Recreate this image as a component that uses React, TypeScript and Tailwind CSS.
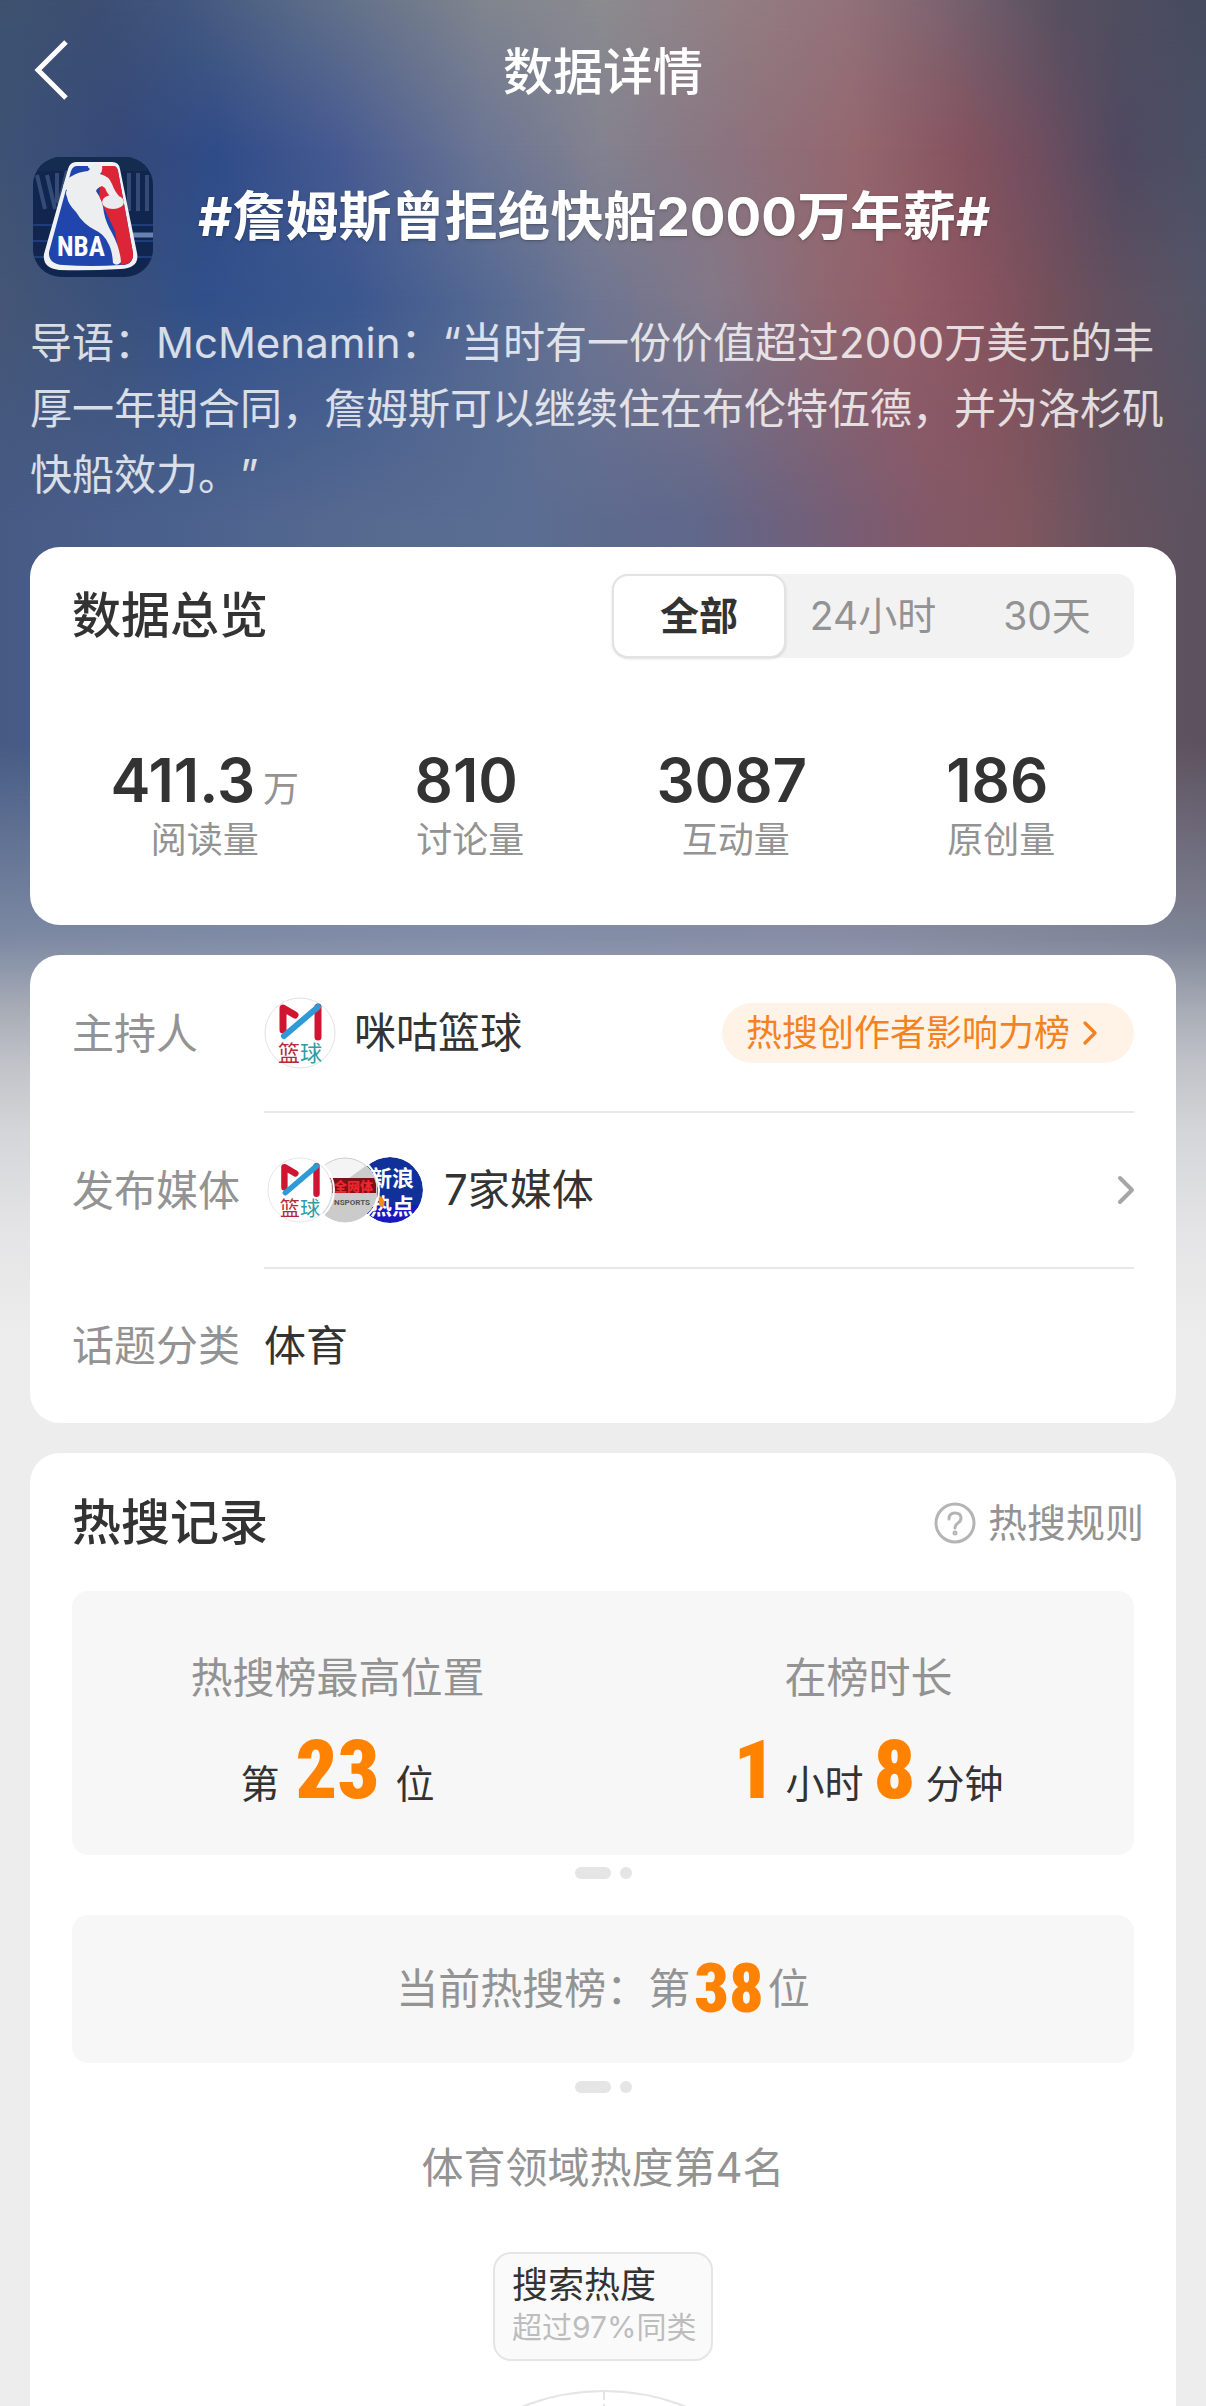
import { ChevronRight } from "lucide-react";
import { useState } from "react";

type IStat = {
  value: string;
  unit?: string;
  label: string;
};

const stats: IStat[] = [
  { value: "411.3", unit: "万", label: "阅读量" },
  { value: "810", label: "讨论量" },
  { value: "3087", label: "互动量" },
  { value: "186", label: "原创量" },
];

const tabs = ["全部", "24小时", "30天"];

// Blurred cover: horizontal colour bands that fade into each other downwards
const Backdrop = () => (
  <div aria-hidden="true" className="absolute inset-x-0 top-0 h-[1350px]">
    <div className="absolute inset-0 bg-[linear-gradient(90deg,#3e526f_0%,#3d4e72_8%,#41577f_15%,#5a6b88_25%,#80858e_40%,#8b8b90_50%,#937d82_62%,#93727a_70%,#7d6470_78%,#565060_88%,#464b60_100%)]" />
    <div className="absolute inset-0 bg-[linear-gradient(90deg,#3e5275_0%,#35497a_10%,#304c88_18%,#465a92_28%,#6b7594_40%,#83828f_50%,#8b747f_60%,#95676f_71%,#85535f_80%,#704e60_86%,#4f4960_93%,#4a5066_100%)] [mask-image:linear-gradient(180deg,transparent_0px,black_150px)]" />
    <div className="absolute inset-0 bg-[linear-gradient(90deg,#455676_0%,#39517c_10%,#31508a_17%,#3b578f_29%,#536892_40%,#6d7592_49%,#837888_59%,#90666f_69%,#935d68_75%,#86535f_82%,#74505b_87%,#63505f_92%,#535568_100%)] [mask-image:linear-gradient(180deg,transparent_150px,black_300px)]" />
    <div className="absolute inset-0 bg-[linear-gradient(90deg,#465a84_0%,#4b618d_15%,#566a90_30%,#5b6d92_44%,#60678a_58%,#735f78_68%,#845968_77%,#82575f_84%,#67535f_92%,#5c515f_100%)] [mask-image:linear-gradient(180deg,transparent_300px,black_520px)]" />
    <div className="absolute inset-0 bg-[linear-gradient(90deg,#7d8aa3_0%,#838ea9_40%,#888ea6_70%,#7f8596_100%)] [mask-image:linear-gradient(180deg,transparent_740px,black_940px)]" />
    <div className="absolute inset-0 bg-[linear-gradient(180deg,transparent_940px,#a8acb6_1010px,#c1c3c9_1065px,#d4d5d8_1130px,#e4e4e6_1230px,#ededed_1340px)]" />
  </div>
);

const CoverLogo = () => (
  <svg viewBox="0 0 120 120" role="img" aria-label="NBA" className="size-[120px] shrink-0 rounded-[28px]">
    <rect width="120" height="120" fill="#10264f" />
    <rect width="120" height="14" fill="#142c50" />
    <path d="M4 18l8 34M14 18l8 34M24 16v30M34 14l-8 34M96 16v38M105 16v38M114 18v36" stroke="#4b6590" strokeWidth="4" opacity=".6" />
    <path d="M0 68h120M0 84h120M0 100h120" stroke="#27498c" strokeWidth="2" opacity=".7" />
    <path d="M88 78h32" stroke="#8ea9d8" strokeWidth="5" opacity=".7" />
    <path d="M43 5h36q7 0 8 7l17 84q3 15-17 16-31 2-61 1-17-2-15-16L35 12q2-7 8-7z" fill="#f1f2f4" />
    <path d="M44 9h36q4 0 5 5l15 82q1 12-12 12-30 2-58 0-15-1-14-13L38 14q2-5 6-5z" fill="#2046ae" />
    <path d="M69 9h11q4 0 5 5l15 82q1 11-12 12l-6-34-16-34z" fill="#dc2638" />
    <path d="M59 9q5-5 10 0 1 5-2 8 9 2 12 10 3 8 7 12l-4 4q-7-4-10-12l-3-2q-5 2-6 5 7 10 8 22 2 10 8 20 8 15 9 29-4 5-8 1-1-14-5-20-4-9-13-13-12-6-19-18-8-8-9-15-2-4 0-7l-4-2q1-9 9-12 6-4 16-5l2-2q-3-2-2-4z" fill="#eceef0" />
    <ellipse cx="80" cy="45" rx="11" ry="7" fill="#e9ebee" />
    <text x="24" y="99" fill="#ffffff" fontSize="27" fontWeight="700" fontFamily="Roboto Condensed, Liberation Sans, sans-serif">
      NBA
    </text>
  </svg>
);

const MiguAvatar = ({ className }: { className: string }) => (
  <svg viewBox="0 0 72 72" role="img" aria-label="咪咕篮球" className={className}>
    <circle cx="36" cy="36" r="35" fill="#ffffff" stroke="#e2e2e2" />
    <path d="M19 33V11l12 7M54 10v30" fill="none" stroke="#cf1531" strokeWidth="7" strokeLinecap="round" strokeLinejoin="round" />
    <path d="M20 39L54 10" stroke="#2f9ad6" strokeWidth="6" strokeLinecap="round" />
    <text x="14" y="64" fontSize="22" fill="#b02a3c" fontFamily="Noto Sans CJK SC, sans-serif">
      篮<tspan fill="#2e9ba6">球</tspan>
    </text>
  </svg>
);

const SportsAvatar = ({ className }: { className: string }) => (
  <svg viewBox="0 0 66 66" role="img" aria-label="Sports" className={className}>
    <clipPath id="sports-clip">
      <circle cx="33" cy="33" r="32" />
    </clipPath>
    <circle cx="33" cy="33" r="32" fill="#f4f4f4" />
    <path d="M66 0v66H0V48z" fill="#cbcbcb" clipPath="url(#sports-clip)" />
    <rect x="12" y="21" width="52" height="15" fill="#7a1218" clipPath="url(#sports-clip)" />
    <text x="22" y="34" fontSize="13" fontWeight="900" fill="#f0252d" fontFamily="Noto Sans CJK SC, sans-serif">
      全网体
    </text>
    <text x="22" y="48" fontSize="8" fontWeight="700" fill="#555555" fontFamily="Roboto, sans-serif">
      NSPORTS
    </text>
    <circle cx="33" cy="33" r="32" fill="none" stroke="#cccccc" />
  </svg>
);

const SinaAvatar = ({ className }: { className: string }) => (
  <svg viewBox="0 0 66 66" role="img" aria-label="新浪热点" className={className}>
    <circle cx="33" cy="33" r="33" fill="#10309a" />
    <path d="M4 48h58a33 33 0 0 1-58 0z" fill="#1b18c0" />
    <g fill="#ffffff" fontSize="22" fontWeight="700" fontFamily="Noto Sans CJK SC, sans-serif">
      <text x="13" y="29">新浪</text>
      <text x="13" y="57">热点</text>
    </g>
    <path d="M22 38q8 5 4 13-6-2-4-13z" fill="#f28a1c" />
  </svg>
);

const PagerDots = () => (
  <div aria-hidden="true" className="flex justify-center gap-[9px]">
    <span className="h-3 w-9 rounded-full bg-[#e5e5e5]" />
    <span className="size-3 rounded-full bg-[#e5e5e5]" />
  </div>
);

const Big = ({ children }: { children: string }) => (
  <b className="font-['Roboto_Condensed','Liberation_Sans_Narrow',sans-serif] text-[82px] leading-[84px] font-black text-[#ff8200]">
    {children}
  </b>
);

const Overview = () => {
  const [active, setActive] = useState(0);

  return (
    <section className="rounded-[30px] bg-white px-[42px] pt-[27px] pb-[63px]">
      <header className="flex items-center justify-between">
        <h2 className="text-[49px] leading-[72px] font-medium">数据总览</h2>
        <div className="flex w-[522px] rounded-2xl bg-[#f2f2f2]">
          {tabs.map((tab, i) => (
            <button
              key={tab}
              type="button"
              aria-pressed={i === active}
              onClick={() => setActive(i)}
              className={
                i === active
                  ? "h-[84px] w-[174px] rounded-2xl border-2 border-[#e3e3e3] bg-white text-[39px] font-bold shadow-sm"
                  : "h-[84px] w-[174px] text-[39px] text-[#939393]"
              }
            >
              {tab}
            </button>
          ))}
        </div>
      </header>
      <dl className="mt-[84px] grid grid-cols-4">
        {stats.map((stat) => (
          <div key={stat.label} className="flex flex-col-reverse items-center">
            <dt className="text-4xl leading-[44px] text-[#939393]">{stat.label}</dt>
            <dd className="flex items-baseline gap-2 text-[60px] leading-[76px] font-semibold">
              {stat.value}
              <span className="text-4xl font-normal text-[#939393]">{stat.unit}</span>
            </dd>
          </div>
        ))}
      </dl>
    </section>
  );
};

const App = () => {
  return (
    <main
      lang="zh-CN"
      className="relative overflow-hidden bg-[#ededed] font-[Inter,'Noto_Sans_CJK_SC',sans-serif] text-[#333333]"
    >
      <Backdrop />
      <div className="relative px-[30px]">
        <nav className="grid h-36 grid-cols-[72px_1fr_72px] items-center text-white">
          <button type="button" aria-label="返回" className="pb-1">
            <svg viewBox="0 0 48 60" aria-hidden="true" className="h-[60px] w-12" fill="none" stroke="currentColor" strokeWidth="5">
              <path d="M36 2L8 30l28 28" />
            </svg>
          </button>
          <h1 className="text-center text-[50px] leading-[72px] font-medium">数据详情</h1>
        </nav>

        <header className="mt-[13px] flex items-center gap-[45px] pl-[3px]">
          <CoverLogo />
          <p className="text-[53px] leading-[72px] font-bold text-white text-shadow-md">
            #詹姆斯曾拒绝快船2000万年薪#
          </p>
        </header>

        <p className="mt-[33px] text-[42px] leading-[66px] text-white/80 [text-spacing-trim:space-all]">
          导语：McMenamin：“当时有一份价值超过2000万美元的丰厚一年期合同，詹姆斯可以继续住在布伦特伍德，并为洛杉矶快船效力。”
        </p>

        <div className="mt-[39px] flex flex-col gap-[30px]">
          <Overview />

          <section className="rounded-[30px] bg-white px-[42px] text-[42px] leading-[60px]">
            <div className="flex">
              <span className="flex h-[158px] w-48 items-center text-[#939393]">主持人</span>
              <div className="flex flex-1 items-center border-b-2 border-[#e8e8e8]">
                <MiguAvatar className="size-[72px]" />
                <span className="ml-[18px] flex-1">咪咕篮球</span>
                <a href="#rank" className="flex h-[60px] items-center rounded-full bg-[#fff3e8] px-6 text-4xl text-[#f58220]">
                  热搜创作者影响力榜
                  <ChevronRight className="size-10" strokeWidth={2} />
                </a>
              </div>
            </div>
            <div className="flex">
              <span className="flex h-[156px] w-48 items-center text-[#939393]">发布媒体</span>
              <a href="#media" className="flex flex-1 items-center border-b-2 border-[#e8e8e8]">
                <span className="flex pl-[3px]">
                  <MiguAvatar className="z-20 size-[66px] rounded-full ring-2 ring-white" />
                  <SportsAvatar className="z-10 -ml-[21px] size-[66px] rounded-full ring-2 ring-white" />
                  <SinaAvatar className="-ml-[21px] size-[66px] rounded-full" />
                </span>
                <span className="ml-[21px] flex-1">7家媒体</span>
                <ChevronRight className="-mr-4 size-12 text-[#a6a6a6]" strokeWidth={2} />
              </a>
            </div>
            <div className="flex h-[154px] items-center">
              <span className="w-48 text-[#939393]">话题分类</span>
              <span>体育</span>
            </div>
          </section>

          <section className="rounded-t-[30px] bg-white px-[42px] pt-[34px]">
            <header className="flex items-center justify-between">
              <h2 className="text-[49px] leading-[72px] font-medium">热搜记录</h2>
              <a href="#rules" className="-mr-[10px] flex items-center gap-3 text-[39px] leading-[60px] text-[#939393]">
                <svg viewBox="0 0 42 42" aria-hidden="true" className="size-[42px]" fill="none" stroke="#b5b5b5" strokeWidth="3">
                  <circle cx="21" cy="21" r="19" />
                  <path d="M15 17q0-6 6-6t6 5q0 3-3 5t-3 5" strokeLinecap="round" />
                  <circle cx="21" cy="31" r="1" />
                </svg>
                热搜规则
              </a>
            </header>

            <dl className="mt-8 grid h-[264px] grid-cols-2 rounded-2xl bg-[#f7f7f7] pt-[57px] text-center">
              <div>
                <dt className="text-[42px] leading-[60px] text-[#939393]">热搜榜最高位置</dt>
                <dd className="mt-5 flex items-baseline justify-center gap-4 text-[39px] leading-[84px]">
                  第<Big>23</Big>位
                </dd>
              </div>
              <div>
                <dt className="text-[42px] leading-[60px] text-[#939393]">在榜时长</dt>
                <dd className="mt-5 flex items-baseline justify-center gap-[10px] text-[39px] leading-[84px]">
                  <Big>1</Big>小时<Big>8</Big>分钟
                </dd>
              </div>
            </dl>
            <div className="mt-3">
              <PagerDots />
            </div>

            <p className="mt-9 flex h-[148px] items-center justify-center rounded-2xl bg-[#f7f7f7] text-[42px] leading-[60px] text-[#939393]">
              当前热搜榜：第
              <b className="mx-1 font-['Roboto_Condensed','Liberation_Sans_Narrow',sans-serif] text-[68px] font-black text-[#ff8200]">
                38
              </b>
              位
            </p>
            <div className="mt-[18px]">
              <PagerDots />
            </div>

            <p className="mt-[45px] text-center text-[42px] leading-[60px] text-[#939393]">体育领域热度第4名</p>

            <div className="mx-auto mt-[54px] w-[220px] rounded-[18px] border-2 border-[#e5e5e5] bg-[#fafafa] px-[17px] pt-[9px] pb-[12px]">
              <p className="text-4xl leading-[44px]">搜索热度</p>
              <p className="text-[30px] leading-10 whitespace-nowrap text-[#bdbdbd]">超过97%同类</p>
            </div>

            <svg viewBox="0 0 440 16" aria-hidden="true" className="mx-auto mt-[29px] block h-4 w-[440px]" fill="none" stroke="#e5e5e5" strokeWidth="2">
              <circle cx="221" cy="222" r="221" />
              <path d="M221 2v8M221 14v2" />
            </svg>
          </section>
        </div>
      </div>
    </main>
  );
};

export default App;
